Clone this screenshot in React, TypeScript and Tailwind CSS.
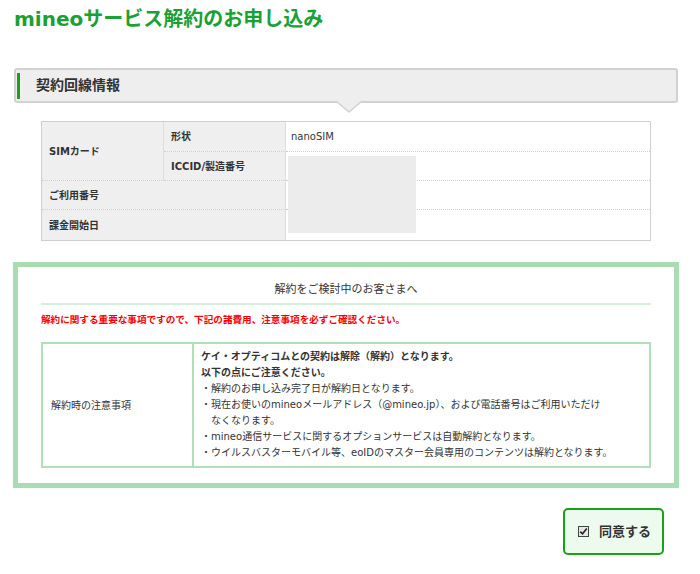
const fontCls = "font-['DejaVu_Sans','Noto_Sans_CJK_JP',sans-serif]";

const thCls = 'flex items-center px-[7px] bg-[#efefef] text-[10px] font-bold text-[#333] border-r border-[#dcdcdc]';
const tdCls = 'flex items-center px-[5px] bg-white text-[10px] text-[#333]';

function CheckIcon() {
  return (
    <svg width="11" height="11" viewBox="0 0 11 11" className="shrink-0">
      <rect x="0.5" y="0.5" width="10" height="10" fill="#e6e6e6" stroke="#444" />
      <path d="M2.3 5.6 L4.5 7.8 L8.8 2.6" fill="none" stroke="#222" strokeWidth="1.6" />
    </svg>
  );
}

export default function App() {
  return (
    <div className={`${fontCls} w-[700px] h-[574px] bg-white overflow-hidden`}>
      <div className="ml-[13px] w-[666px]">
        <h1 className="pt-[5px] pl-[1px] text-[20px] leading-[28px] font-bold text-[#19a133]">
          mineoサービス解約のお申し込み
        </h1>

        {/* section header */}
        <div className="relative mt-[35px] ml-[1px] w-[664px] h-[35px] rounded-[3px] border-2 border-[#d2d2d2] bg-[#eeeeee] flex items-center">
          <div className="ml-[1px] w-[3px] h-[26px] bg-[#1aa01a]" />
          <span className="ml-[16px] text-[14px] font-bold text-[#333]">契約回線情報</span>
          <svg width="26" height="13" viewBox="0 0 26 13" className="absolute left-[320px] bottom-[-12px]">
            <path d="M0 1 L13 12 L26 1" fill="#eeeeee" stroke="#d2d2d2" strokeWidth="1.5" />
            <rect x="1.5" y="0" width="23" height="1.2" fill="#eeeeee" />
          </svg>
        </div>

        {/* contract table */}
        <div className="relative mt-[18px] ml-[28px] w-[610px] grid grid-cols-[122px_122px_1fr] grid-rows-[30px_29px_29px_30px] border border-[#cfcfcf]">
          <div className={`${thCls} row-span-2 border-b border-b-[#cfcfcf]`} style={{ borderBottomStyle: 'dotted' }}>
            SIMカード
          </div>
          <div className={`${thCls} border-b border-b-[#cfcfcf]`} style={{ borderBottomStyle: 'dotted' }}>
            形状
          </div>
          <div className={`${tdCls} border-b border-[#cfcfcf]`} style={{ borderBottomStyle: 'dotted' }}>
            nanoSIM
          </div>
          <div className={`${thCls} border-b border-b-[#cfcfcf]`} style={{ borderBottomStyle: 'dotted' }}>
            ICCID/製造番号
          </div>
          <div className={`${tdCls} border-b border-[#cfcfcf]`} style={{ borderBottomStyle: 'dotted' }} />
          <div className={`${thCls} col-span-2 border-b border-b-[#cfcfcf]`} style={{ borderBottomStyle: 'dotted' }}>
            ご利用番号
          </div>
          <div className={`${tdCls} border-b border-[#cfcfcf]`} style={{ borderBottomStyle: 'dotted' }} />
          <div className={`${thCls} col-span-2`}>課金開始日</div>
          <div className={tdCls} />
          <div className="absolute left-[246px] top-[34px] w-[128px] h-[77px] bg-[#ececec]" />
        </div>

        {/* notice box */}
        <div className="mt-[21px] w-[666px] border-[5px] border-[#aadcb4] bg-white px-[23px] pt-[15px] pb-[15px]">
          <p className="text-center text-[11px] leading-[16px] text-[#333]">解約をご検討中のお客さまへ</p>
          <div className="mt-[5px] h-[2px] bg-[#d6efdb]" />
          <p className="mt-[7px] text-[9.6px] leading-[16px] font-bold text-[#ff0000]">
            解約に関する重要な事項ですので、下記の諸費用、注意事項を必ずご確認ください。
          </p>
          <div className="mt-[14px] flex border-2 border-[#b0e0b9] text-[10px] text-[#333]">
            <div className="w-[151px] shrink-0 flex items-center px-[8px] border-r-2 border-[#b0e0b9]">
              解約時の注意事項
            </div>
            <div className="flex-1 px-[7px] py-[5px] leading-[16px]">
              <p className="font-bold">ケイ・オプティコムとの契約は解除（解約）となります。</p>
              <p className="font-bold">以下の点にご注意ください。</p>
              <p>・解約のお申し込み完了日が解約日となります。</p>
              <p>・現在お使いのmineoメールアドレス（@mineo.jp）、および電話番号はご利用いただけ</p>
              <p className="pl-[10px]">なくなります。</p>
              <p>・mineo通信サービスに関するオプションサービスは自動解約となります。</p>
              <p>・ウイルスバスターモバイル等、eoIDのマスター会員専用のコンテンツは解約となります。</p>
            </div>
          </div>
        </div>

        {/* agree button */}
        <div className="mt-[20px] flex justify-end pr-[15px]">
          <button className="w-[101px] h-[47px] rounded-[5px] border-2 border-[#1aa01a] bg-[#edfaee] flex items-center pl-[13px] gap-[10px] text-[13px] font-bold text-[#333]">
            <CheckIcon />
            <span>同意する</span>
          </button>
        </div>
      </div>
    </div>
  );
}
